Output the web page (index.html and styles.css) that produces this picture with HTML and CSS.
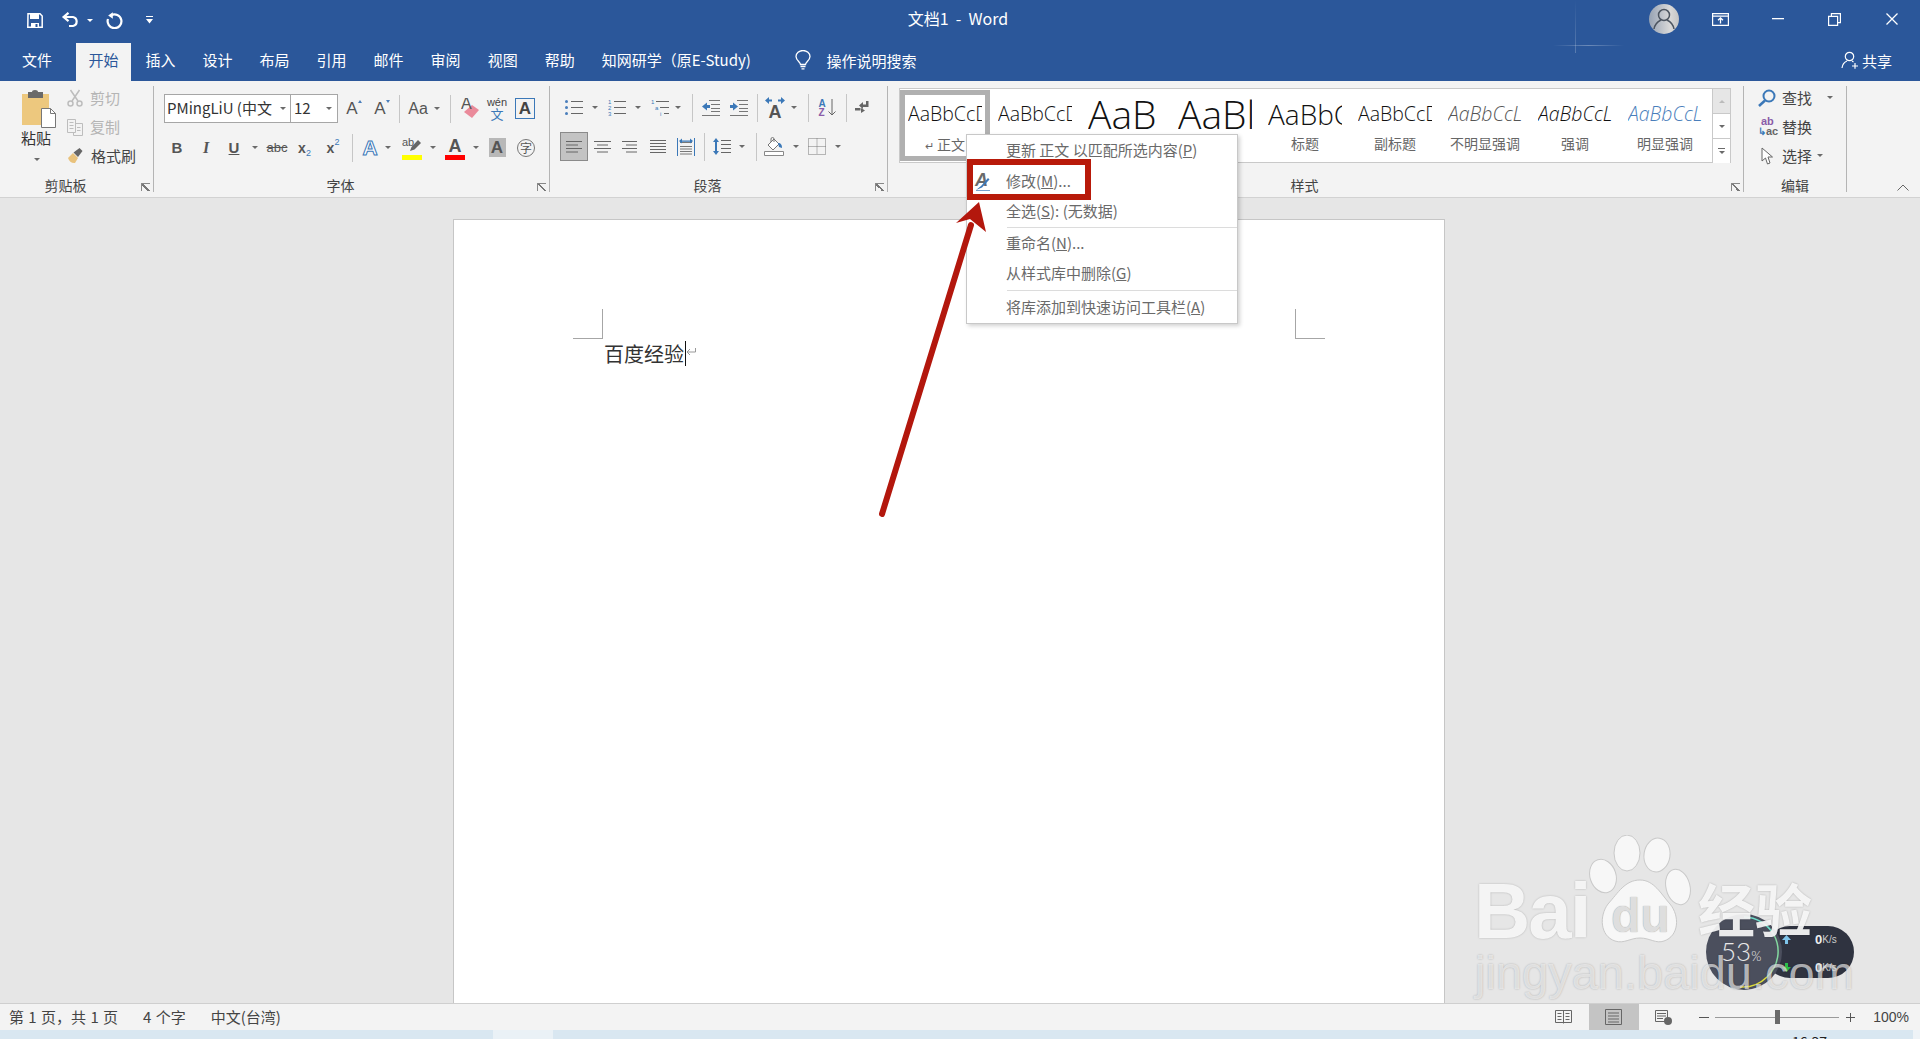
FILE: index.html
```html
<!DOCTYPE html>
<html lang="zh-CN">
<head>
<meta charset="utf-8">
<title>文档1 - Word</title>
<link rel="stylesheet" href="styles.css">
</head>
<body>
<div class="app">
  <header class="titlebar">
    <div class="qat">
      <span class="qcell c-save"><svg width="16" height="15" viewBox="0 0 16 15"><path d="M1 .8h12l2.200 2.200v11.200H.8z" fill="none" stroke="#fff" stroke-width="1.500"/><path d="M3 1h9v5H3z" fill="#fff"/><path d="M4 10h8v4H4z" fill="#fff"/><path d="M8.500 11h2v3h-2z" fill="#2b579a"/></svg></span>
      <span class="qcell c-undo"><svg width="18" height="16" viewBox="0 0 18 16" fill="none" stroke="#fff" stroke-width="2.200"><path d="M3 5h9a4.600 4.600 0 0 1 0 9H8"/><path d="M7.500 .8L2.600 5l4.900 4.200"/></svg></span>
      <span class="qcell c-qarrow"><i class="caret white"></i></span>
      <span class="qcell c-redo"><svg width="17" height="17" viewBox="0 0 17 17" fill="none" stroke="#fff" stroke-width="2.200"><path d="M5.200 3.200A6.900 6.900 0 1 1 2 7"/><path d="M6.800 .2v6.600L2.200 3.400z" fill="#fff" stroke="none"/></svg></span>
      <span class="qcell c-qcustom"><svg width="7" height="8" viewBox="0 0 7 8"><path d="M0 0h7v1H0zM0 3h7L3.500 7.500z" fill="#fff"/></svg></span>
    </div>
    <div class="doc-title">文档1&nbsp; -&nbsp; Word</div>
    <div class="winctl">
      <span class="wcell"><span class="avatar"><svg width="30" height="30" viewBox="0 0 30 30" fill="none" stroke="#4c5560" stroke-width="1.500"><circle cx="15" cy="11" r="5.500"/><path d="M5 25c1-6 5-8 7-9M25 25c-1-6-5-8-7-9"/></svg></span></span>
      <span class="wcell"><svg width="17" height="13" viewBox="0 0 17 13" fill="none" stroke="#fff" stroke-width="1.200"><path d="M.6.6h15.800v11.800H.6zM.6 3.200h15.800"/><path d="M8.500 10.500V5M6 7.200l2.500-2.300L11 7.200" stroke-width="1.300"/></svg></span>
      <span class="wcell"><svg width="12" height="2" viewBox="0 0 12 2"><path d="M0 0h12v1.300H0z" fill="#fff"/></svg></span>
      <span class="wcell"><svg width="13" height="13" viewBox="0 0 13 13" fill="none" stroke="#fff" stroke-width="1.200"><path d="M.6 3.400h9v9h-9zM3.400 3.200V.6h9v9H9.800"/></svg></span>
      <span class="wcell"><svg width="12" height="12" viewBox="0 0 12 12" stroke="#fff" stroke-width="1.300"><path d="M.5.5l11 11M11.500.5l-11 11"/></svg></span>
    </div>
    <i class="glint-v"></i><i class="glint-h"></i>
  </header>

  <nav class="tabs">
    <a class="tab first">文件</a><a class="tab active">开始</a><a class="tab">插入</a><a class="tab">设计</a><a class="tab">布局</a><a class="tab">引用</a><a class="tab">邮件</a><a class="tab">审阅</a><a class="tab">视图</a><a class="tab">帮助</a><a class="tab">知网研学（原E-Study)</a>
    <span class="tell"><svg width="16" height="20" viewBox="0 0 16 20" fill="none" stroke="#fff" stroke-width="1.300"><path d="M5.500 14.500c0-2.500-4.500-4-4.500-8a7 6 0 0 1 14 0c0 4-4.500 5.500-4.500 8z"/><path d="M5.500 16.500h5M6.500 18.800h3"/></svg>操作说明搜索</span>
    <span class="share"><svg width="18" height="18" viewBox="0 0 18 18" fill="none" stroke="#fff" stroke-width="1.200"><circle cx="8.500" cy="5.500" r="4.200"/><path d="M1 17c.5-4 2.500-6 5-7M11 10l1.500 1M14 12v5.800M11 15h6"/></svg>共享</span>
  </nav>

  <section class="ribbon">
    <div class="group g-clip">
      <div class="body clip-body">
        <div class="paste">
          <svg width="34" height="38" viewBox="0 0 34 38"><path d="M0 4h27v31H0z" fill="#edc87e"/><path d="M6 2h4a3 2 0 0 1 6 0h5v6H6z" fill="#6a6a6a"/><path d="M19.500 18.500h9l5 5v14h-14z" fill="#fff" stroke="#777"/><path d="M28.500 18.500v5h5" fill="none" stroke="#777"/></svg>
          <span class="paste-text">粘贴</span>
          <i class="caret"></i>
        </div>
        <div class="clip-rows">
          <div class="clip-row off"><svg width="16" height="18" viewBox="0 0 16 18" fill="none" stroke="#bdbdbd" stroke-width="1.500"><circle cx="3.500" cy="14.500" r="2.500"/><circle cx="12.500" cy="14.500" r="2.500"/><path d="M5 12L12.500 1M11 12L3.500 1"/></svg>剪切</div>
          <div class="clip-row off"><svg width="16" height="18" viewBox="0 0 16 18" fill="none" stroke="#bdbdbd"><path d="M.5 1.500h8v13h-8zM8.500 5.500h7v12h-9v-3M2.500 4.500h4M2.500 7.500h4M2.500 10.500h4M10 9.500h3.500M10 12.500h3.500"/></svg>复制</div>
          <div class="clip-row"><svg width="17" height="17" viewBox="0 0 17 17"><path d="M1 11l5-5 5 5-3 5c-3 .5-6-1.500-7-5z" fill="#e9c27c"/><path d="M6.500 5.500L12.500 1l3 3-4.500 6z" fill="#666"/></svg>格式刷</div>
        </div>
      </div>
      <div class="glabel">剪贴板<i class="launcher"></i></div>
    </div>

    <div class="group g-font">
      <div class="body rows">
        <div class="row">
          <div class="combo font-name"><span>PMingLiU (中文</span><i class="caret"></i></div>
          <div class="combo font-size"><span>12</span><i class="caret"></i></div>
          <span class="cell w28"><span class="gl growth up">A</span></span>
          <span class="cell w28"><span class="gl growth down">A</span></span>
          <i class="vsep ml5"></i>
          <span class="cell w28 ml4"><span class="gl aa">Aa</span></span><span class="cell w10"><i class="caret"></i></span>
          <i class="vsep ml8"></i>
          <span class="cell w24 ml7"><svg width="19" height="21" viewBox="0 0 19 21"><path d="M3 14L11 7l7 5-7 8z" fill="#ea8a9a"/><text x="0" y="11" class="svgA">A</text></svg></span>
          <span class="cell w26 ml2"><span class="wen"><small>wén</small><b>文</b></span></span>
          <span class="cell w26 ml2"><span class="boxA">A</span></span>
        </div>
        <div class="row gap10">
          <span class="cell w26"><b class="gl fmt">B</b></span>
          <span class="cell w32"><i class="gl fmt it">I</i></span>
          <span class="cell w24"><u class="gl fmt bu">U</u></span>
          <span class="cell w18"><i class="caret"></i></span>
          <span class="cell w26"><s class="abc">abc</s></span>
          <span class="cell w29"><span class="sub">x<sub>2</sub></span></span>
          <span class="cell w28"><span class="sub">x<sup>2</sup></span></span>
          <i class="vsep ml5"></i>
          <span class="cell w26 ml4"><span class="fxA">A</span></span><span class="cell w10"><i class="caret"></i></span>
          <span class="cell w30 ml4"><span class="barA"><span class="hi">ab</span><svg class="pen" width="13" height="13" viewBox="0 0 13 13"><path d="M1 12l1.500-4L9 1l3 3-6.500 6.500z" fill="#666"/></svg><i class="bar yellow"></i></span></span><span class="cell w12"><i class="caret"></i></span>
          <span class="cell w30 ml1"><span class="barA"><span class="redA">A</span><i class="bar red"></i></span></span><span class="cell w12"><i class="caret"></i></span>
          <span class="cell w30"><span class="shadeA">A</span></span>
          <span class="cell w28"><span class="zi">字</span></span>
        </div>
      </div>
      <div class="glabel">字体<i class="launcher"></i></div>
    </div>

    <div class="group g-para">
      <div class="body rows">
        <div class="row">
          <span class="cell w28"><svg width="18" height="17" viewBox="0 0 18 17"><path d="M6 2.500h12M6 8.500h12M6 14.500h12" stroke="#666"/><circle cx="1.500" cy="2.500" r="1.500" fill="#4a7ebb"/><circle cx="1.500" cy="8.500" r="1.500" fill="#4a7ebb"/><circle cx="1.500" cy="14.500" r="1.500" fill="#4a7ebb"/></svg></span>
          <span class="cell w14"><i class="caret"></i></span>
          <span class="cell w30"><svg width="18" height="17" viewBox="0 0 18 17"><path d="M6 2.500h12M6 8.500h12M6 14.500h12" stroke="#666"/><text x="0" y="5" class="tiny">1</text><text x="0" y="11" class="tiny">2</text><text x="0" y="17" class="tiny">3</text></svg></span>
          <span class="cell w12"><i class="caret"></i></span>
          <span class="cell w26 ml3"><svg width="18" height="17" viewBox="0 0 18 17"><path d="M5 2.500h13M9 8.500h9M13 14.500h5" stroke="#666"/><text x="0" y="5" class="tiny">1</text><text x="4" y="11" class="tiny">a</text><text x="9" y="17" class="tiny">i</text></svg></span>
          <span class="cell w10"><i class="caret"></i></span>
          <i class="vsep ml9"></i>
          <span class="cell w28 ml4"><svg width="18" height="16" viewBox="0 0 18 16"><path d="M7 .5h11M9 4.500h9M9 8.500h9M9 11.500h9M0 15.500h18" stroke="#777"/><path d="M0 6.500L5 2.500v2.500h3v3H5v2.500z" fill="#3b78b8"/></svg></span>
          <span class="cell w28"><svg width="18" height="16" viewBox="0 0 18 16"><path d="M7 .5h11M9 4.500h9M9 8.500h9M9 11.500h9M0 15.500h18" stroke="#777"/><path d="M8 6.500L3 2.500v2.500H0v3h3v2.500z" fill="#3b78b8"/></svg></span>
          <i class="vsep ml4"></i>
          <span class="cell w28 ml3"><span class="dirA"><svg width="20" height="8" viewBox="0 0 20 8"><path d="M0 3.500L4 0v2.500h3v2H4V7zM20 3.500L16 0v2.500h-3v2h3V7z" fill="#3b78b8"/></svg><b>A</b></span></span>
          <span class="cell w10"><i class="caret"></i></span>
          <i class="vsep ml9"></i>
          <span class="cell w36"><span class="sort"><span class="az"><em>A</em><strong>Z</strong></span><svg width="8" height="17" viewBox="0 0 8 17" fill="none" stroke="#666"><path d="M4 0v16M.5 12.500L4 16l3.500-3.500"/></svg></span></span>
          <i class="vsep ml1"></i>
          <span class="cell w32"><svg width="17" height="15" viewBox="0 0 17 15" fill="#666"><path d="M11 1h2.500v6H7V4.500h4z"/><path d="M8 2l-.1 7L4 5.500zM0 8h5.500v2.500H0zM6 8l4 2.500L6 13z"/></svg></span>
        </div>
        <div class="row gap10">
          <span class="cell w28 pressed"><svg class="al" width="16" height="12" viewBox="0 0 16 12"><path d="M0 .5h16M0 4h12M0 7.500h16M0 11h12" stroke="#666"/></svg></span>
          <span class="cell w29"><svg width="17" height="12" viewBox="0 0 17 12"><path d="M0 .5h17M3 4h11M0 7.500h17M3 11h11" stroke="#666"/></svg></span>
          <span class="cell w25"><svg width="15" height="12" viewBox="0 0 15 12"><path d="M0 .5h15M4 4h11M0 7.500h15M4 11h11" stroke="#666"/></svg></span>
          <span class="cell w32"><svg width="16" height="13" viewBox="0 0 16 13"><path d="M0 .5h16M0 3.500h16M0 6.500h16M0 9.500h16M0 12.500h16" stroke="#666"/></svg></span>
          <span class="cell w24"><svg width="18" height="18" viewBox="0 0 18 18"><path d="M.5 0v18M17.500 0v18" stroke="#3b78b8"/><path d="M3 4.500h12M3 8.500h12M3 11h12M3 13.500h12M3 16h12" stroke="#777"/><path d="M2 3l3-2.500v2h8v-2l3 2.500-3 2.500v-1.800H5v1.800z" fill="#3b78b8"/></svg></span>
          <i class="vsep ml6"></i>
          <span class="cell w30 ml2"><svg width="18" height="17" viewBox="0 0 18 17"><path d="M8 2.500h10M8 6.500h10M8 10.500h10M8 14.500h10" stroke="#666"/><path d="M3 0L6 4H4v9h2l-3 4-3-4h2V4H0z" fill="#3b78b8"/></svg></span>
          <span class="cell w10"><i class="caret"></i></span>
          <i class="vsep ml9"></i>
          <span class="cell w34"><svg width="20" height="19" viewBox="0 0 20 19"><path d="M4 8l6-6 5 5-6 6z" fill="#fff" stroke="#777"/><path d="M7 5V2a1.500 1.500 0 0 1 3 0v3" fill="none" stroke="#777"/><path d="M14 6c3 0 4 2 4 5l-3-1z" fill="#3b78b8"/><path d="M.5 14.500h19v4H.5z" fill="#fff" stroke="#888"/></svg></span>
          <span class="cell w10"><i class="caret"></i></span>
          <span class="cell w31"><svg width="18" height="17" viewBox="0 0 18 17" fill="none" stroke="#777" stroke-dasharray="1 1"><path d="M.5.500h17v16H.5zM9 .5v16M.5 8.500h17"/></svg></span>
          <span class="cell w12"><i class="caret"></i></span>
        </div>
      </div>
      <div class="glabel">段落<i class="launcher"></i></div>
    </div>

    <div class="group g-styles">
      <div class="body">
        <div class="gallery">
          <div class="style selected"><div class="sample s18">AaBbCcD</div><div class="slabel"><span class="ret">↵</span> 正文</div></div>
          <div class="style"><div class="sample s18">AaBbCcD</div><div class="slabel">无间隔</div></div>
          <div class="style"><div class="sample s37">AaB</div><div class="slabel">标题 1</div></div>
          <div class="style"><div class="sample s37">AaBl</div><div class="slabel">标题 2</div></div>
          <div class="style"><div class="sample s26">AaBbC</div><div class="slabel">标题</div></div>
          <div class="style"><div class="sample s18">AaBbCcD</div><div class="slabel">副标题</div></div>
          <div class="style"><div class="sample s18 ital grayish">AaBbCcL</div><div class="slabel">不明显强调</div></div>
          <div class="style"><div class="sample s18 ital">AaBbCcL</div><div class="slabel">强调</div></div>
          <div class="style"><div class="sample s18 ital bluish">AaBbCcL</div><div class="slabel">明显强调</div></div>
          <div class="gscroll">
            <span class="sb up off"><i class="caret up-c"></i></span>
            <span class="sb"><i class="caret"></i></span>
            <span class="sb more"><i class="dash"></i><i class="caret"></i></span>
          </div>
        </div>
      </div>
      <div class="glabel">样式<i class="launcher"></i></div>
    </div>

    <div class="group g-edit">
      <div class="body clip-rows edit-rows">
        <div class="clip-row"><svg width="18" height="18" viewBox="0 0 18 18" fill="none" stroke="#3b78b8"><circle cx="11" cy="7" r="5.500" stroke-width="2"/><path d="M7 11.500L1 17" stroke-width="2.500"/></svg>查找<i class="caret ml-caret"></i></div>
        <div class="clip-row"><span class="abac"><em>ab</em><span>↳<strong>ac</strong></span></span>替换</div>
        <div class="clip-row"><svg class="arrowc" width="12" height="18" viewBox="0 0 12 18" fill="#fff" stroke="#666"><path d="M1 1v13l3.500-3 2 6 2.500-1-2-6h4.500z"/></svg>选择<i class="caret ml-caret2"></i></div>
      </div>
      <div class="glabel plain">编辑</div>
    </div>
    <div class="collapse"><svg width="12" height="7" viewBox="0 0 12 7" fill="none" stroke="#666"><path d="M.5 6.500L6 1l5.500 5.500"/></svg></div>
  </section>

  <main class="canvas">
    <div class="page">
      <div class="marks"><i class="mark left"></i><i class="mark right"></i></div>
      <p class="doc-line">百度经验<i class="caretline"></i><svg width="10" height="8" viewBox="0 0 10 8" fill="none" stroke="#999"><path d="M9.500 0v4H1M4 1L1 4l3 3"/></svg></p>
    </div>
  </main>

  <footer class="status">
    <div class="st-left"><span>第 1 页，共 1 页</span><span>4 个字</span><span>中文(台湾)</span></div>
    <div class="st-right">
      <span class="view"><svg width="17" height="14" viewBox="0 0 17 14" fill="none" stroke="#666"><path d="M.5.500h16v12H.5zM8.500.5v13M2.500 3.500h4M2.500 6.500h4M2.500 9.500h4M10.500 3.500h4M10.500 6.500h4M10.500 9.500h4"/></svg></span>
      <span class="view on"><svg width="17" height="16" viewBox="0 0 17 16" fill="none" stroke="#666"><path d="M.5.500h16v15H.5zM3 4h11M3 7h11M3 10h11M3 13h11"/></svg></span>
      <span class="view"><svg width="17" height="15" viewBox="0 0 17 15"><path d="M.5.500h12v11H.5z" fill="none" stroke="#666"/><path d="M2 3.500h9M2 6h9M2 8.500h6" stroke="#666"/><circle cx="13" cy="11" r="4" fill="#666"/></svg></span>
      <span class="zoom-minus"></span>
      <span class="slider"><i class="thumb"></i></span>
      <span class="zoom-plus"></span>
      <span class="pct">100%</span>
    </div>
  </footer>
  <div class="desk"><span class="d-a"></span><span class="d-b"></span><span class="d-c">16:37</span><span class="d-d"></span></div>
</div>

<div class="menu">
  <div class="mi">更新 正文 以匹配所选内容(<u>P</u>)</div>
  <div class="mi mi-mod"><span class="mi-ico"><span>A</span><svg width="14" height="14" viewBox="0 0 14 14"><path d="M0 13l5-4 7-8 1.500 1.500-7.500 8z" fill="#3b78b8"/><path d="M0 13.500h14" stroke="#3b78b8" stroke-width=".7"/></svg></span>修改(<u>M</u>)...</div>
  <div class="mi">全选(<u>S</u>): (无数据)</div>
  <i class="msep s1"></i>
  <div class="mi">重命名(<u>N</u>)...</div>
  <div class="mi">从样式库中删除(<u>G</u>)</div>
  <i class="msep s2"></i>
  <div class="mi">将库添加到快速访问工具栏(<u>A</u>)</div>
</div>
<div class="redbox"></div>
<svg class="redarrow" width="120" height="330" viewBox="0 0 120 330"><path d="M6 317L95 28" stroke="#b3170d" stroke-width="6" stroke-linecap="round"/><path d="M103 5L80 26l14-4 16 13z" fill="#b3170d"/></svg>

<div class="widget">
  <div class="pill"><span class="sp s-a"><svg width="9" height="9" viewBox="0 0 9 9"><path d="M4.500 0L9 5H6v4H3V5H0z" fill="#7ec4ea"/></svg><b>0</b>K/s</span><span class="sp s-b"><svg width="9" height="9" viewBox="0 0 9 9"><path d="M4.500 9L9 4H6V0H3v4H0z" fill="#2bbf4a"/></svg><b>0</b>K/s</span></div>
  <div class="dial"><svg width="76" height="76" viewBox="0 0 76 76" fill="none" stroke-width="1.500"><path d="M38 3a35 35 0 0 1 30 18" stroke="#6fe0cc"/><path d="M68 21a35 35 0 0 1-7 42" stroke="#84d9a0"/><path d="M61 63a35 35 0 0 1-27 10" stroke="#dede3a"/></svg><span class="dial-t">53<small>%</small></span></div>
</div>
<div class="mark-wm">
  <svg class="paw" width="106" height="112" viewBox="0 0 106 112"><g fill="#f7f7f7" stroke="#c9c9c9" stroke-width="1"><ellipse cx="39" cy="18" rx="13" ry="18"/><ellipse cx="69" cy="20" rx="13" ry="17" transform="rotate(8 69 20)"/><ellipse cx="15" cy="41" rx="13" ry="17" transform="rotate(-18 15 41)"/><ellipse cx="90" cy="52" rx="12" ry="18" transform="rotate(-14 90 52)"/><path d="M52 45c14 0 21 14 30 24 10 12 9 32-6 37-8 3-14-3-24-3s-16 6-25 3C12 101 11 81 20 69c10-11 17-24 32-24z"/></g></svg>
  <span class="wm bai">Bai</span>
  <span class="wm du">du</span>
  <span class="wm jy">经验</span>
  <span class="wm url">jingyan.baidu.com</span>
</div>
</body>
</html>
```
FILE: styles.css
```css
*{box-sizing:border-box}
html,body{margin:0;padding:0;width:1920px;height:1039px;overflow:hidden}
body{position:relative;font-family:"Noto Sans CJK SC","Liberation Sans",sans-serif;font-size:14px;color:#444;background:#e6e6e6}
i{font-style:normal;display:inline-block}
svg{display:block;flex:none}
.app{display:flex;flex-direction:column;height:1039px}

/* title bar */
.titlebar{position:relative;height:40px;flex:none;background:#2b579a;display:grid;grid-template-columns:1fr auto 1fr;align-items:center;color:#fff}
.qat{display:flex;align-items:center;padding-left:27px}
.qcell{display:flex;align-items:center;justify-content:center}
.c-save{width:16px}
.c-undo{width:18px;margin-left:18px}
.c-qarrow{width:6px;margin-left:8px}
.c-redo{width:17px;margin-left:13px}
.c-qcustom{width:7px;margin-left:23px}
.doc-title{font-size:16px;padding-right:4px;margin-top:-4px}
.winctl{display:flex;justify-content:flex-end;margin-top:-2px}
.wcell{width:57px;height:34px;display:flex;align-items:center;justify-content:center}
.avatar{width:30px;height:30px;border-radius:50%;background:linear-gradient(90deg,#96a2b3,#d9d9d9 70%,#c4c4c4)}
.glint-v{position:absolute;left:1575px;top:0;width:1px;height:53px;background:linear-gradient(180deg,rgba(255,255,255,0),rgba(255,255,255,.22));z-index:2}
.glint-h{position:absolute;left:1553px;top:45px;width:71px;height:1px;background:linear-gradient(90deg,rgba(255,255,255,0),rgba(255,255,255,.3),rgba(255,255,255,0));z-index:2}

/* tabs */
.tabs{height:41px;flex:none;background:#2b579a;display:flex;align-items:flex-end;padding-left:8.500px;color:#fff;font-size:15px}
.tab{height:38px;line-height:34px;padding:0 12.500px;margin:0 1px;white-space:nowrap}
.tab.first{margin-right:10.500px}
.tab.active{background:#f3f3f3;color:#2b579a}
.tell{display:flex;align-items:center;height:34px;margin-bottom:4px;margin-left:31px;gap:15px;font-size:15px}
.share{display:flex;align-items:center;height:34px;margin-bottom:4px;margin-left:auto;margin-right:28px;gap:3px}

/* ribbon */
.ribbon{height:117px;flex:none;background:#f3f3f3;border-bottom:1px solid #d2d2d2;display:flex;padding-top:5px;position:relative}
.group{height:106px;display:flex;flex-direction:column;border-right:1px solid #b4b4b4;flex:none}
.g-clip{width:154px}
.g-font{width:396px}
.g-para{width:338px}
.g-styles{width:856px}
.g-edit{width:103px}
.body{flex:1;min-height:0}
.glabel{position:relative;height:16px;line-height:19px;text-align:center;padding-right:22px;font-size:14px;color:#444;white-space:nowrap}
.glabel.plain{padding-right:0}
.launcher{position:absolute;right:3px;bottom:1px;width:9px;height:8px;border-left:1px solid #888;border-top:1px solid #888;background:linear-gradient(45deg,transparent 40%,#777 40%,#777 55%,transparent 55%)}

.caret{width:0;height:0;border-left:4px solid transparent;border-right:4px solid transparent;border-top:4px solid #6a6a6a}
.caret.white{border-left-width:3px;border-right-width:3px;border-top:3px solid #fff}
.cell{height:29px;display:flex;align-items:center;justify-content:center;flex:none}
.cell .caret{border-left-width:3.500px;border-right-width:3.500px;border-top-width:3.500px}
.vsep{width:1px;height:28px;background:#c6c6c6;flex:none}
.w10{width:10px}.w12{width:12px}.w14{width:14px}.w18{width:18px}.w24{width:24px}.w25{width:25px}.w26{width:26px}.w28{width:28px}.w29{width:29px}.w30{width:30px}.w31{width:31px}.w32{width:32px}.w34{width:34px}.w36{width:36px}
.ml1{margin-left:1px}.ml2{margin-left:2px}.ml3{margin-left:3px}.ml4{margin-left:4px}.ml5{margin-left:5px}.ml6{margin-left:6px}.ml7{margin-left:7px}.ml8{margin-left:8px}.ml9{margin-left:9px}

/* clipboard */
.clip-body{display:flex;padding-left:22px;margin-top:-1px}
.clip-body .clip-rows{margin-top:-2px}
.paste{width:45px;display:flex;flex-direction:column;align-items:flex-start;padding-top:5px}
.paste-text{font-size:15px;line-height:20px;color:#333;margin-left:-1px}
.paste .caret{margin:10px 0 0 12px;border-left-width:3.500px;border-right-width:3.500px;border-top-width:3.500px}
.clip-rows{display:flex;flex-direction:column}
.clip-row{height:29px;display:flex;align-items:center;gap:7px;font-size:15px;color:#444;white-space:nowrap}
.clip-row.off{color:#b5b5b5}

/* rows */
.rows{padding:8px 0 0 10px}
.g-para .rows{padding-top:7px}
.row{display:flex;align-items:center;height:29px}
.gap10{margin-top:10px}
.combo{height:29px;border:1px solid #a6a6a6;background:#fff;display:flex;align-items:center;justify-content:space-between;font-size:15px;line-height:26px;color:#333;padding:0 4px 0 2px;white-space:nowrap;flex:none}
.combo span{margin-top:-2px}
.font-name{width:127px}
.font-size{width:48px;padding:0 5px 0 3px;margin-left:-1px}
.combo .caret{border-left-width:3.500px;border-right-width:3.500px;border-top-width:3.500px}
.gl{font-family:"Liberation Sans",sans-serif;color:#555;line-height:1;position:relative}
.growth{font-size:17px}
.growth::after{content:"";position:absolute;right:-4px;top:0;border-left:2.500px solid transparent;border-right:2.500px solid transparent}
.growth.up::after{border-bottom:3px solid #4a7ebb}
.growth.down::after{border-top:3px solid #4a7ebb}
.aa{font-size:16px}
.svgA{font:16px "Liberation Sans",sans-serif;fill:#555}
.wen{display:flex;flex-direction:column;align-items:center;font-size:11px;line-height:10px;color:#444}
.wen small{font-size:11px;font-family:"Liberation Sans",sans-serif}
.wen b{font-weight:400;color:#3b78b8;font-size:13px;line-height:13px}
.boxA{width:20px;height:21px;border:1px solid #3b78b8;font:bold 17px/19px "Liberation Sans",sans-serif;text-align:center;color:#444}
.fmt{font-size:15px;font-weight:700;font-style:normal;color:#555}
.it{font-style:italic;font-family:"Liberation Serif",serif;font-size:16px}
.bu{font-size:15px}
.abc{font:13px "Liberation Sans",sans-serif;color:#555}
.sub{font:bold 14px/1 "Liberation Sans",sans-serif;color:#555;display:flex;align-items:flex-start}
.sub sub{font-size:9px;font-weight:400;color:#3b78b8;align-self:flex-end;line-height:8px;margin-bottom:-2px}
.sub sup{font-size:9px;font-weight:400;color:#3b78b8;line-height:8px;margin-top:-3px}
.fxA{font:bold 21px/1 "Liberation Sans",sans-serif;color:#fff;-webkit-text-stroke:1px #3b78b8}
.barA{position:relative;width:20px;height:24px;display:block;text-align:center}
.hi{position:absolute;left:0;top:0;font:11px/12px "Liberation Sans",sans-serif;color:#555}
.pen{position:absolute;right:0;top:3px}
.bar{position:absolute;left:0;bottom:0;width:20px;height:5px}
.yellow{background:#ff0}
.red{background:#f00}
.redA{font:bold 18px/20px "Liberation Sans",sans-serif;color:#555}
.shadeA{width:17px;height:19px;background:#b8b8b8;font:bold 17px/19px "Liberation Sans",sans-serif;color:#555;text-align:center}
.zi{width:18px;height:18px;border:1px solid #777;border-radius:50%;font-size:12px;line-height:16px;text-align:center;color:#555}
.tiny{font:6px "Liberation Sans",sans-serif;fill:#3b78b8}
.dirA{display:flex;flex-direction:column;align-items:center;font:bold 18px/14px "Liberation Sans",sans-serif;color:#555}
.sort{display:flex;gap:2px;align-items:center}
.az{display:flex;flex-direction:column;font:bold 10px/9px "Liberation Sans",sans-serif}
.az em{color:#3b78b8;font-style:normal}
.az strong{color:#8a5ca8}
.pressed{background:#c3c3c3;border:1px solid #8a8a8a}

/* styles */
.gallery{width:832px;height:75px;margin:2px 0 0 11px;background:#fff;border:1px solid #c9c9c9;display:flex}
.style{width:90px;height:71px;display:flex;flex-direction:column;align-items:center;flex:none;margin-top:1px}
.style.selected{border:5px solid #b0b0b0}
.style.selected .sample{height:40px;line-height:38px}
.sample{width:74px;height:44px;line-height:48px;overflow:hidden;white-space:nowrap;font-family:"Open Sans","Liberation Sans",sans-serif;font-weight:300;color:#111;flex:none}
.s18{font-size:19.500px}
.s26{font-size:28px}
.s37{font-size:39px}
.ital{font-style:italic}
.grayish{color:#555}
.bluish{color:#4a7ebb}
.slabel{font-size:14px;line-height:18px;color:#666;text-align:center;white-space:nowrap}
.ret{font-size:11px}
.gscroll{width:18px;margin-left:2px;display:flex;flex-direction:column;height:74px;flex:none;border-left:1px solid #c9c9c9}
.sb{flex:1;display:flex;flex-direction:column;align-items:center;justify-content:center;gap:2px;border-bottom:1px solid #c9c9c9;background:#fff}
.sb:last-child{border-bottom:0}
.sb.off{background:#e6e6e6}
.sb .caret{border-left-width:3px;border-right-width:3px;border-top-width:3px}
.caret.up-c{border-top:0;border-bottom:3px solid #bbb}
.dash{width:7px;height:1px;background:#6a6a6a}

/* editing */
.edit-rows{padding-left:14px;margin-top:-3px}
.clip-row .caret{border-left-width:3.500px;border-right-width:3.500px;border-top-width:3.500px}
.ml-caret{margin-left:9px}
.ml-caret2{margin-left:-1px}
.edit-rows .clip-row{gap:6px}
.abac{width:18px;display:flex;flex-direction:column;font:bold 11px/10px "Liberation Sans",sans-serif}
.abac em{font-style:normal;color:#8a5ca8;padding-left:3px}
.abac span{color:#3b78b8;white-space:nowrap;font-size:10px}
.abac strong{color:#666;font-size:11px}
.arrowc{margin:0 3px}
.collapse{margin:98px 0 0 50px}

/* canvas */
.canvas{flex:1;min-height:0;background:#e6e6e6;display:flex;justify-content:center;padding:21px 22px 0 0;overflow:hidden}
.page{width:992px;background:#fff;border:1px solid #c6c6c6;border-bottom:0}
.marks{display:flex;justify-content:space-between;padding:89px 119px 0}
.mark{width:30px;height:30px;border-bottom:1px solid #a6a6a6}
.mark.left{border-right:1px solid #a6a6a6}
.mark.right{border-left:1px solid #a6a6a6}
.doc-line{margin:0;padding-left:150px;height:28px;display:flex;align-items:center;font-size:20px;color:#333}
.caretline{width:1px;height:25px;background:#111;margin-left:1px}
.doc-line svg{margin-top:-2px}

/* status */
.status{height:27px;flex:none;background:#f3f3f3;border-top:1px solid #cfcfcf;display:flex;justify-content:space-between;align-items:stretch;color:#444;font-size:15px}
.st-left{display:flex;align-items:center;padding-left:9px;gap:25px;margin-top:-1px;word-spacing:1px}
.st-right{display:flex;align-items:center;padding-right:11px}
.view{width:50px;height:26px;display:flex;align-items:center;justify-content:center}
.view.on{background:#c4c4c4}
.zoom-minus{width:10px;height:1px;background:#555;margin-left:10.500px;margin-right:6px}
.slider{position:relative;width:124px;height:1px;background:#9a9a9a}
.thumb{position:absolute;left:60px;top:-7px;width:5px;height:14px;background:#6a6a6a}
.zoom-plus{position:relative;width:9px;height:9px;margin-left:7px;background:linear-gradient(#555,#555) center/9px 1px no-repeat,linear-gradient(#555,#555) center/1px 9px no-repeat}
.pct{margin-left:18px;font-size:14px;color:#444;font-family:"Liberation Sans",sans-serif}

/* desktop strip */
.desk{height:9px;flex:none;display:flex;overflow:hidden}
.d-a{width:493px;background:#d9e7f1}
.d-b{width:60px;background:#eaf1f6}
.d-c{flex:1;background:#d9e7f1;text-align:right;padding:5px 86px 0 0;font-size:14px;line-height:14px;color:#222}
.d-d{width:7px;background:#eef3f7}

/* context menu */
.menu{position:absolute;left:966px;top:134px;width:272px;height:190px;background:#fff;border:1px solid #c8c8c8;box-shadow:2px 2px 4px rgba(0,0,0,.18);padding-top:2px;z-index:5}
.mi{position:relative;height:30.500px;line-height:26.500px;padding-left:39px;color:#6a6a6a;font-size:15px;white-space:nowrap}
.msep{display:block;height:1px;background:#dcdcdc;margin-left:40px}
.s1{margin-top:-2px;margin-bottom:2px}
.s2{margin-top:-1px;margin-bottom:3px}
.mi-ico{position:absolute;left:6px;top:4px;width:22px;height:20px}
.mi-ico span{position:absolute;left:2px;top:-2px;font:italic bold 18px/20px "Liberation Sans",sans-serif;color:#6a6a6a}
.mi-ico svg{position:absolute;left:3px;top:5px}
.redbox{position:absolute;left:967px;top:159px;width:124px;height:41px;border:6px solid #b81a0a;z-index:6}
.redarrow{position:absolute;left:876px;top:197px;z-index:7}

/* speed widget */
.widget{position:absolute;left:1706px;top:916px;width:150px;height:72px;z-index:3}
.pill{position:absolute;left:58px;top:10px;width:90px;height:52px;border-radius:26px;background:#2f3340;color:#ccc;font:10px/1 "Liberation Sans",sans-serif}
.sp{position:absolute;left:18px;display:flex;align-items:center;width:70px}
.sp svg{margin-right:24px}
.sp b{font-size:13px;color:#eee}
.s-a{top:7px}
.s-b{top:35px}
.dial{position:absolute;left:0;top:-2px;width:76px;height:76px;border-radius:50%;background:#4b4f5d}
.dial svg{position:absolute;left:0;top:0}
.dial-t{position:absolute;left:15px;top:21px;font:300 26px/32px "Lato","Liberation Sans",sans-serif;color:#e8e8e8}
.dial-t small{font-size:13px}

/* watermark */
.mark-wm{position:absolute;left:1470px;top:835px;width:360px;height:170px;z-index:4;pointer-events:none}
.paw{position:absolute;left:118px;top:0}
.wm{position:absolute;color:rgba(250,250,250,.92);text-shadow:0 0 2px rgba(0,0,0,.25);font-family:"Liberation Sans",sans-serif;white-space:nowrap}
.bai{left:4px;top:31px;font-size:78px;line-height:90px;font-weight:700;letter-spacing:-2px}
.du{left:141px;top:53px;font-size:48px;line-height:56px;color:#dedede;font-weight:700;text-shadow:0 0 1px #999}
.jy{left:228px;top:32px;font:700 57px/80px "Noto Sans CJK SC",sans-serif}
.url{left:5px;top:110px;font-size:47px;line-height:56px;color:rgba(250,250,250,.65)}
```
